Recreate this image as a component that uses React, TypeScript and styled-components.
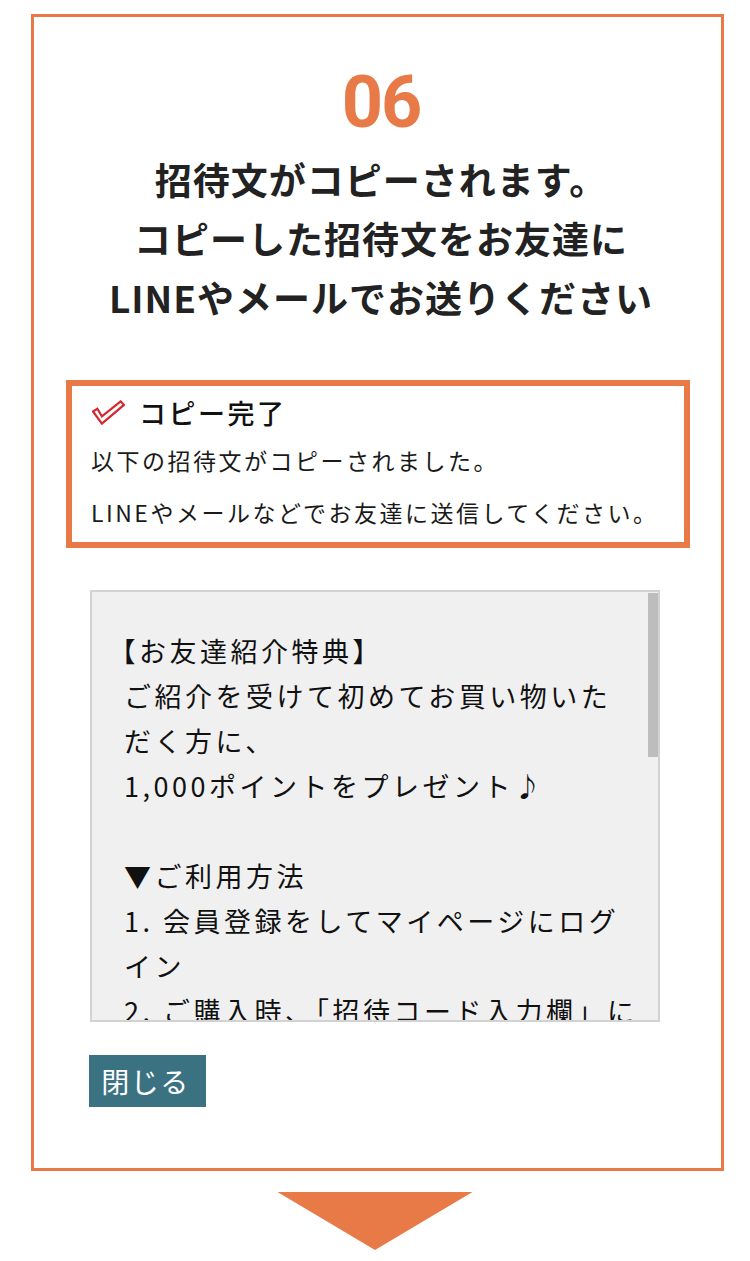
import React from "react";
import styled, { createGlobalStyle } from "styled-components";

const ORANGE = "#e87a47";

const Global = createGlobalStyle`
  html, body { margin: 0; padding: 0; background: #fff; }
  body { font-family: "Noto Sans CJK JP", "Noto Sans", sans-serif; color: #1a1a1a; }
  * { box-sizing: border-box; }
`;

const Page = styled.div`
  width: 750px;
  height: 1261px;
  padding-top: 14px;
  display: flex;
  flex-direction: column;
  align-items: center;
`;

const Frame = styled.section`
  width: 693px;
  margin-left: 5px;
  border: 3px solid ${ORANGE};
  padding: 50px 31px 61px 32px;
  display: flex;
  flex-direction: column;
`;

const Header = styled.header`
  display: flex;
  flex-direction: column;
  align-items: center;
  padding-left: 6px;
`;

const StepNo = styled.div`
  font-family: Roboto, "Liberation Sans", sans-serif;
  font-weight: 700;
  font-size: 72px;
  line-height: 72px;
  color: ${ORANGE};
  letter-spacing: -2px;
`;

const Title = styled.h2`
  margin: 11px 0 0;
  font-size: 37px;
  line-height: 59px;
  font-weight: 700;
  letter-spacing: 1px;
  color: #222;
  text-align: center;
`;

const NoticeBox = styled.div`
  margin-top: 53px;
  border: 6px solid ${ORANGE};
  padding: 8px 18px 12px 19px;
`;

const NoticeHead = styled.div`
  display: flex;
  align-items: center;
  gap: 14px;
  height: 36px;
  font-size: 27px;
  font-weight: 500;
  letter-spacing: 2.5px;
  color: #111;
  padding-left: 1px;
`;

const NoticeText = styled.p<{ $gap: number }>`
  margin: ${(p) => p.$gap}px 0 0;
  font-size: 23px;
  line-height: 36px;
  letter-spacing: 2.5px;
  color: #1a1a1a;
  white-space: nowrap;
`;

const Body = styled.div`
  padding-left: 24px;
  display: flex;
  flex-direction: column;
  align-items: flex-start;
`;

const TextBox = styled.div`
  position: relative;
  margin-top: 42px;
  width: 570px;
  height: 432px;
  border: 2px solid #d2d2d2;
  background: #f0f0f0;
  overflow: hidden;
  padding: 36px 20px 0 32px;
`;

const TextLine = styled.div`
  font-size: 27px;
  line-height: 45px;
  height: 45px;
  letter-spacing: 3.5px;
  color: #111;
  white-space: nowrap;
`;

const HalfBracket = styled.span`
  font-feature-settings: "halt";
  margin-left: -2px;
`;

const ScrollThumb = styled.div`
  position: absolute;
  top: 1px;
  right: 0;
  width: 10px;
  height: 164px;
  background: #bdbdbd;
`;

const CloseButton = styled.button`
  margin-top: 33px;
  margin-left: -1px;
  width: 117px;
  height: 52px;
  border: none;
  background: #3b7281;
  color: #fff;
  font-family: "Noto Sans CJK JP", "Noto Sans", sans-serif;
  font-size: 28px;
  line-height: 52px;
  letter-spacing: 1.5px;
  padding: 0 4px 0 0;
  cursor: pointer;
`;

const Arrow = styled.div`
  margin-top: 21px;
  width: 195px;
  height: 58px;
  background: ${ORANGE};
  clip-path: polygon(0 0, 100% 0, 50% 100%);
`;

const CheckIcon = () => (
  <svg width="33" height="25" viewBox="0 0 32 24" aria-hidden="true">
    <polygon
      points="1,11 5.2,8.4 9.6,15.8 27.8,1.2 31,4.6 9.6,22.8"
      fill="#fff"
      stroke="#d8262e"
      strokeWidth="2.1"
      strokeLinejoin="miter"
    />
  </svg>
);

const lines: React.ReactNode[] = [
  <>
    <HalfBracket>【</HalfBracket>お友達紹介特典】
  </>,
  "ご紹介を受けて初めてお買い物いた",
  "だく方に、",
  "1,000ポイントをプレゼント♪",
  "",
  "▼ご利用方法",
  "1. 会員登録をしてマイページにログ",
  "イン",
  "2. ご購入時、「招待コード入力欄」に",
];

export default function App() {
  return (
    <>
      <Global />
      <Page>
        <Frame>
          <Header>
            <StepNo>06</StepNo>
            <Title>
              招待文がコピーされます。
              <br />
              コピーした招待文をお友達に
              <br />
              LINEやメールでお送りください
            </Title>
          </Header>
          <NoticeBox>
            <NoticeHead>
              <CheckIcon />
              <span>コピー完了</span>
            </NoticeHead>
            <NoticeText $gap={12}>以下の招待文がコピーされました。</NoticeText>
            <NoticeText $gap={16}>LINEやメールなどでお友達に送信してください。</NoticeText>
          </NoticeBox>
          <Body>
            <TextBox>
              {lines.map((l, i) => (
                <TextLine key={i}>{l === "" ? "\u00a0" : l}</TextLine>
              ))}
              <ScrollThumb />
            </TextBox>
            <CloseButton type="button">閉じる</CloseButton>
          </Body>
        </Frame>
        <Arrow />
      </Page>
    </>
  );
}
